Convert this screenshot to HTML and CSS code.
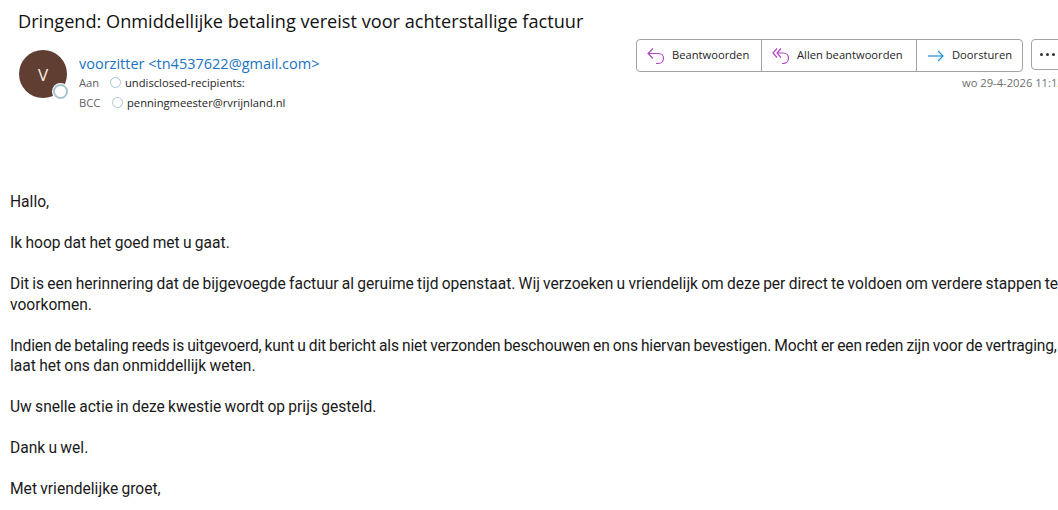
FILE: index.html
```html
<!DOCTYPE html>
<html lang="nl">
<head>
    <meta charset="UTF-8">
    <title>Dringend: Onmiddellijke betaling vereist voor achterstallige factuur</title>
    <link rel="stylesheet" href="styles.css">
</head>
<body>

<div class="mail">
    <h1 class="subject">Dringend: Onmiddellijke betaling vereist voor achterstallige factuur</h1>

    <div class="header">
        <div class="avatar">V<span class="status"></span></div>
        <div class="people">
            <div class="sender">voorzitter &lt;tn4537622@gmail.com&gt;</div>
            <div class="line"><span class="label label-aan">Aan</span><span class="dot"></span><span>undisclosed-recipients:</span></div>
            <div class="line"><span class="label label-bcc">BCC</span><span class="dot"></span><span>penningmeester@rvrijnland.nl</span></div>
        </div>
        <div class="actions">
            <div class="toolbar">
                <div class="btn-group">
                    <button class="btn btn-reply">
                        <svg width="18" height="18" viewBox="0 0 18 18" fill="none" stroke="#b146c2" stroke-width="1.2"><path d="M6 1.5 L1 6.5 L6 11.5"/><path d="M1 6.5 H11.5 C14.5 6.5 16.5 8.6 16.5 11.2 C16.5 14 14.5 16.5 11.5 16.5 H9"/></svg>
                        <span class="btn-text">Beantwoorden</span>
                    </button>
                    <button class="btn btn-all">
                        <svg width="18" height="18" viewBox="0 0 18 18" fill="none" stroke="#b146c2" stroke-width="1.2"><path d="M5 1.5 L1 6 L5 10.5"/><path d="M9 1.5 L5 6 L9 10.5"/><path d="M5 6 H11 C14.5 6 16.5 8.4 16.5 11 C16.5 13.8 14.5 16.5 11 16.5 H10"/></svg>
                        <span class="btn-text">Allen beantwoorden</span>
                    </button>
                    <button class="btn btn-forward">
                        <svg width="18" height="18" viewBox="0 0 18 18" fill="none" stroke="#1e8fd5" stroke-width="1.2"><path d="M1 9 H16"/><path d="M11 4 L16 9 L11 14"/></svg>
                        <span class="btn-text">Doorsturen</span>
                    </button>
                </div>
                <button class="more" aria-label="Meer"><span></span><span></span><span></span></button>
            </div>
            <div class="date">wo 29-4-2026 11:12</div>
        </div>
    </div>

    <div class="body">
        <p>Hallo,</p>
        <p>Ik hoop dat het goed met u gaat.</p>
        <p><span class="fit-a">Dit is een herinnering dat de bijgevoegde factuur al geruime tijd openstaat. Wij verzoeken u vriendelijk om deze per direct te voldoen om verdere stappen te</span><br>voorkomen.</p>
        <p><span class="fit-b">Indien de betaling reeds is uitgevoerd, kunt u dit bericht als niet verzonden beschouwen en ons hiervan bevestigen. Mocht er een reden zijn voor de vertraging,</span><br>laat het ons dan onmiddellijk weten.</p>
        <p>Uw snelle actie in deze kwestie wordt op prijs gesteld.</p>
        <p>Dank u wel.</p>
        <p>Met vriendelijke groet,</p>
    </div>
</div>

</body>
</html>
```

FILE: styles.css
```css
html, body {
    margin: 0;
    height: 510px;
    overflow: hidden;
    background-color: #fff;
}
.mail {
    width: 1100px;
    font-family: "Open Sans", sans-serif;
    color: #242424;
}
.subject {
    margin: 0;
    padding: 8px 0 0 18px;
    font-size: 18.15px;
    line-height: 26px;
    font-weight: 400;
    color: #111;
}
.header {
    display: flex;
    padding: 5px 0 0 19px;
    height: 153px;
}
.avatar {
    position: relative;
    flex: none;
    width: 48px;
    height: 48px;
    margin-top: 11px;
    border-radius: 50%;
    background-color: #603e31;
    color: #fbeee3;
    font-size: 17px;
    line-height: 50px;
    text-align: center;
}
.status {
    position: absolute;
    right: -1px;
    bottom: -1px;
    width: 11px;
    height: 11px;
    border: 2px solid #a9c3d3;
    border-radius: 50%;
    background-color: #fff;
    box-shadow: 0 0 0 1px #fff;
}
.people {
    flex: none;
    margin-left: 12px;
    padding-top: 16px;
    width: 557px;
}
.sender {
    font-size: 14.5px;
    line-height: 18px;
    margin-bottom: -1px;
    color: #1a73c4;
}
.line {
    display: flex;
    align-items: center;
    height: 20px;
    font-size: 11.2px;
    color: #242424;
}
.label {
    color: #616161;
}
.label-aan {
    width: 31px;
}
.label-bcc {
    width: 33px;
}
.dot {
    width: 9px;
    height: 9px;
    margin-right: 4px;
    border: 1px solid #a9c3d3;
    border-radius: 50%;
}
.toolbar {
    display: flex;
    gap: 8px;
}
.btn-group {
    display: flex;
    height: 31px;
    border: 1px solid #a3a3a3;
    border-radius: 4px;
}
.btn {
    display: flex;
    align-items: center;
    gap: 7px;
    padding: 0 0 0 10px;
    border: none;
    border-right: 1px solid #a3a3a3;
    background: none;
    font-family: inherit;
    font-size: 11.2px;
    line-height: 14px;
    color: #242424;
}
.btn-text {
    padding-bottom: 2px;
}
.btn-reply {
    width: 125px;
}
.btn-all {
    width: 155px;
}
.btn-forward {
    width: 105px;
    border-right: none;
}
.more {
    display: flex;
    align-items: center;
    gap: 3px;
    width: 58px;
    height: 31px;
    padding: 0 0 0 8px;
    border: 1px solid #a3a3a3;
    border-radius: 4px;
    background: none;
}
.more span {
    width: 3px;
    height: 3px;
    border-radius: 50%;
    background-color: #333;
}
.date {
    margin-top: 3px;
    padding-left: 326px;
    font-size: 11.2px;
    line-height: 16px;
    color: #707070;
}
.body {
    padding-left: 10px;
    font-family: Roboto, sans-serif;
    font-size: 15.6px;
    line-height: 20.5px;
    word-spacing: -0.6px;
    color: #1a1a1a;
    white-space: nowrap;
}
.body p {
    margin: 0 0 20.5px;
}
.fit-a {
    letter-spacing: -0.02px;
}
.fit-b {
    letter-spacing: -0.16px;
}
```
